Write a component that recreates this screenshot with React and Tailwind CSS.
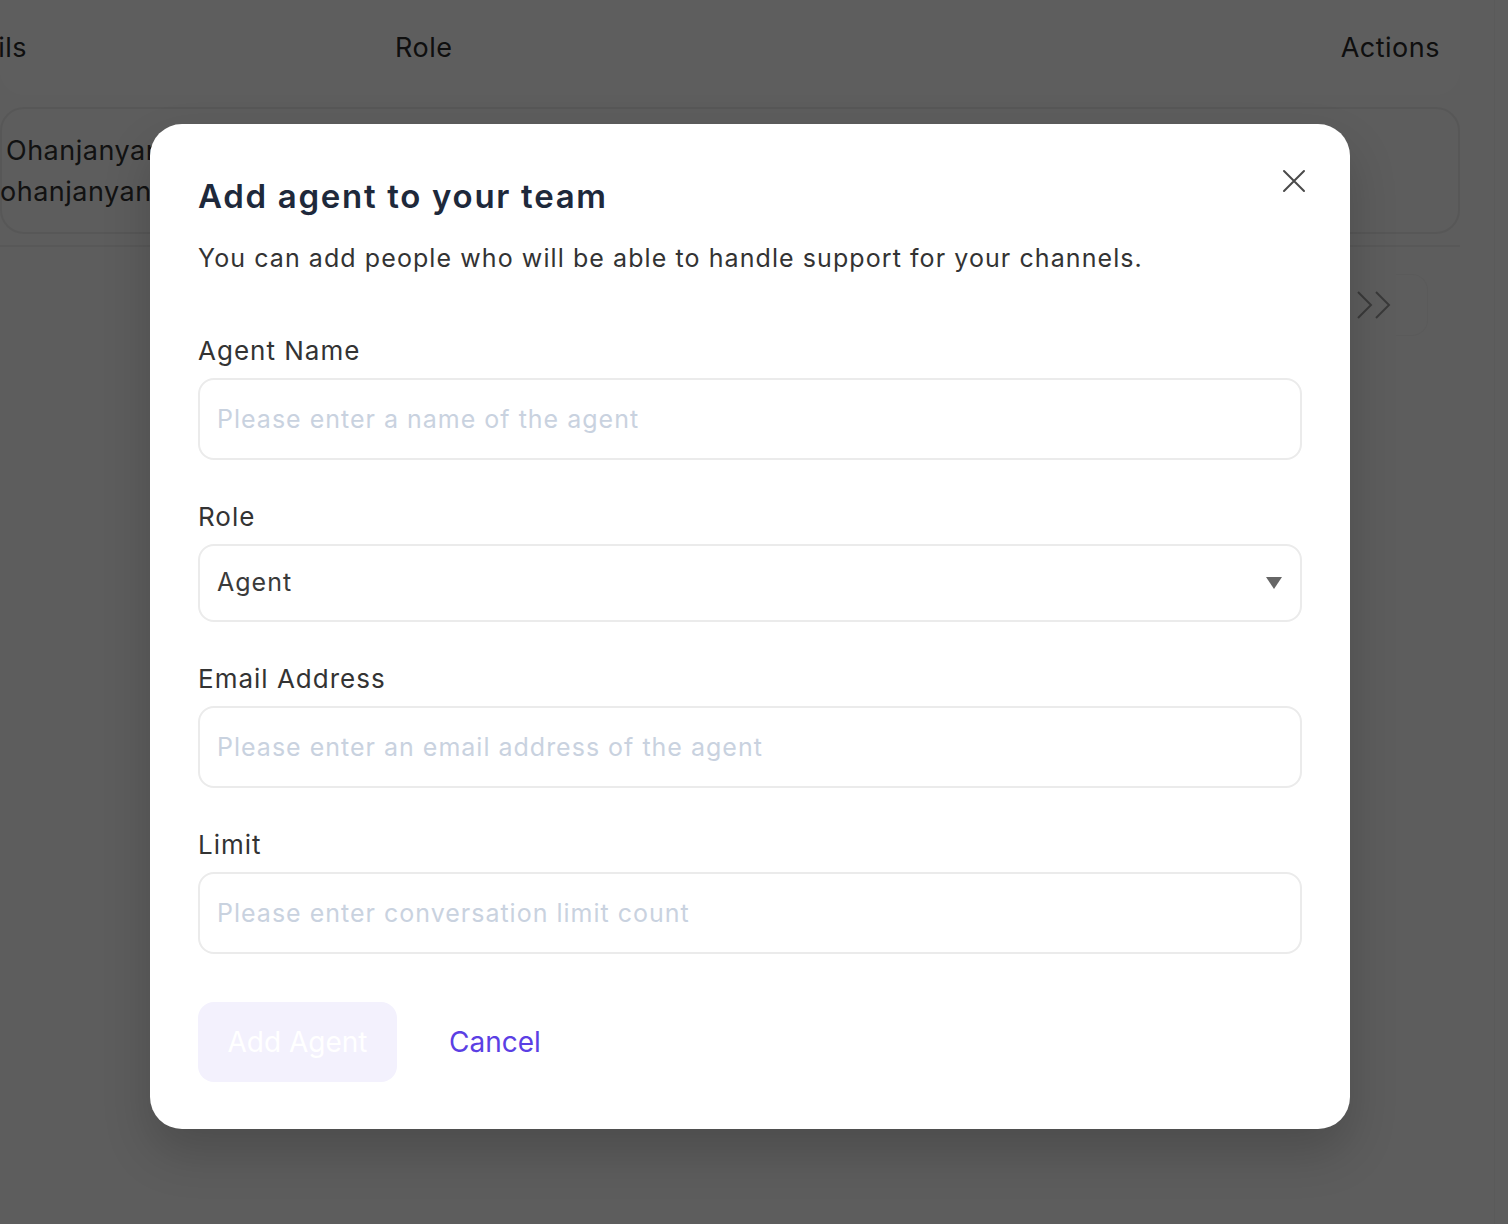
const font = { fontFamily: 'Inter, "Noto Sans", sans-serif' };

const Field = ({ label, placeholder }) => {
  return (
    <div className="flex flex-col">
      <label className="text-[26px] leading-[32px] tracking-[1px] text-[#333333] mb-[11px]">{label}</label>
      <input
        placeholder={placeholder}
        className="h-[82px] w-full rounded-[16px] border-2 border-[#ebebeb] px-[17px] text-[25px] tracking-[1px] text-[#333333] outline-none placeholder:text-[#c9d2df]"
      />
    </div>
  );
};

const App = () => {
  return (
    <div className="relative h-[1224px] w-[1508px] overflow-hidden bg-[#fbfbfb]" style={font}>
      {/* page behind the dialog */}
      <div className="flex h-full">
        <div className="w-[1460px] flex flex-col">
          <div className="h-[95px] pt-[2px] rounded-b-[24px] bg-white flex items-center text-[27px] tracking-[0.5px] text-[#2a2a2a]">
            <span className="-ml-[173px] w-[200px] text-right">Details</span>
            <span className="ml-[368px] flex-1">Role</span>
            <span className="pr-[20px]">Actions</span>
          </div>
          <div className="mt-[12px] h-[127px] rounded-[24px] border-2 border-[#ececec] flex flex-col justify-center text-[27px] leading-[41px] tracking-[0.5px] text-[#333333]">
            <div className="flex">
              <span className="-ml-[116px] w-[112px] text-right">Arman</span>
              <span className="ml-[8px]">Ohanjanyan</span>
            </div>
            <div className="flex">
              <span className="-ml-[100px] w-[98px] text-right">arman.</span>
              <span>ohanjanyan@gmail.com</span>
            </div>
          </div>
          <div className="mt-[11px] border-t-2 border-[#eeeeee]" />
          <div className="mt-[27px] flex justify-end pr-[32px]">
            <div className="flex h-[62px] items-center">
              <svg width="36" height="30" viewBox="0 0 36 30" fill="none" stroke="#9c9c9c" strokeWidth="2">
                <path d="M2 2l13 13-13 13" />
                <path d="M20 2l13 13-13 13" />
              </svg>
              <div className="ml-[4px] h-[62px] w-[32px] rounded-r-[16px] border border-l-0 border-[#f4f4f4]" />
            </div>
          </div>
        </div>
        <div className="ml-auto w-[14px] bg-[#fdfdfd] border-l border-[#f4f4f4]" />
      </div>

      {/* dimming overlay */}
      <div className="absolute inset-0 bg-black/[0.63]" />

      {/* dialog */}
      <div className="absolute inset-0 flex items-start pl-[150px] pt-[124px]">
        <div className="relative w-[1200px] rounded-[32px] bg-white px-[48px] pt-[48px] pb-[47px] shadow-[0_24px_48px_rgba(0,0,0,0.18)]">
          <button className="absolute right-[44px] top-[45px] p-0">
            <svg width="24" height="24" viewBox="0 0 24 24" fill="none" stroke="#4a4a4a" strokeWidth="2" strokeLinecap="round">
              <path d="M2 2l20 20M22 2L2 22" />
            </svg>
          </button>
          <h2 className="text-[33px] leading-[48px] tracking-[1.7px] font-semibold text-[#1e293b]">Add agent to your team</h2>
          <p className="mt-[20px] text-[25px] leading-[36px] tracking-[1.08px] text-[#333333]">
            You can add people who will be able to handle support for your channels.
          </p>

          <div className="mt-[59px] flex flex-col gap-[41px]">
            <Field label="Agent Name" placeholder="Please enter a name of the agent" />
            <div className="flex flex-col">
              <label className="text-[26px] leading-[32px] tracking-[1px] text-[#333333] mb-[11px]">Role</label>
              <div className="flex h-[78px] items-center justify-between rounded-[16px] border-2 border-[#ebebeb] pl-[17px] pr-[18px] text-[25px] tracking-[1px] text-[#3a3a3a]">
                <span>Agent</span>
                <svg width="16" height="12" viewBox="0 0 16 12">
                  <path d="M0 0h16L8 12z" fill="#666666" />
                </svg>
              </div>
            </div>
            <Field label="Email Address" placeholder="Please enter an email address of the agent" />
            <Field label="Limit" placeholder="Please enter conversation limit count" />
          </div>

          <div className="mt-[48px] flex items-center gap-[52px]">
            <button className="h-[80px] w-[199px] rounded-[16px] bg-[#f3f1fd] text-[28px] text-white">Add Agent</button>
            <button className="text-[28px] text-[#5b3fe4]">Cancel</button>
          </div>
        </div>
      </div>
    </div>
  );
};

export default App;
